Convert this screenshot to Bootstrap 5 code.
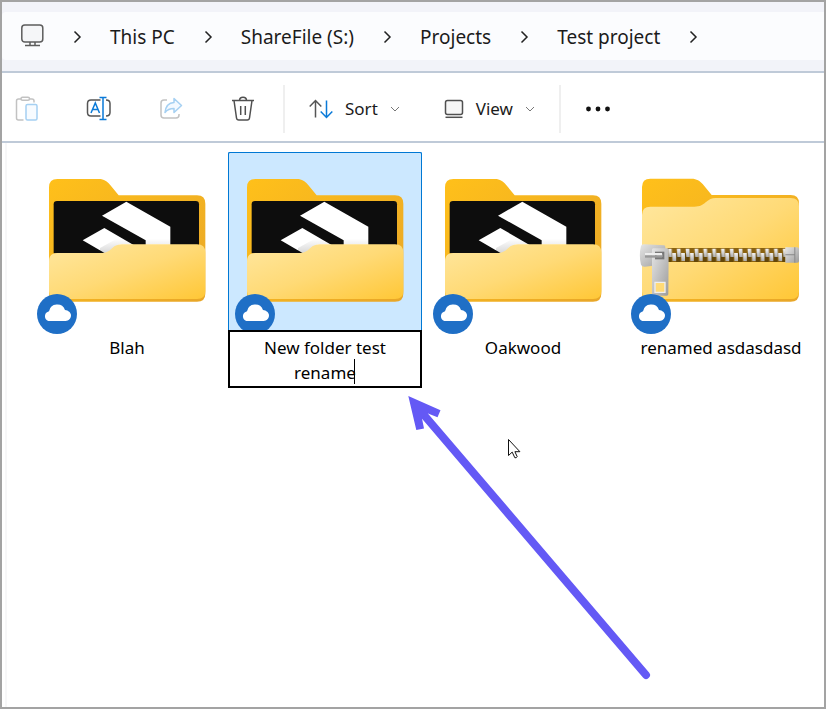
<!DOCTYPE html>
<html lang="en">
<head>
<meta charset="utf-8">
<meta name="viewport" content="width=device-width, initial-scale=1">
<title>Test project</title>
<link href="https://cdn.jsdelivr.net/npm/bootstrap@5.3.0/dist/css/bootstrap.min.css" rel="stylesheet">
<style>
body { font-family: "Noto Sans", "Open Sans", sans-serif; color: #1b1b1b; background: #fff; }
.explorer { border: 2px solid #a3a3a3; }
.address-strip { background: #f2f3f9; padding: 10px 0 11px; border-bottom: 2px solid #bfcad8; }
.address-bar { background: #fbfcfe; height: 48px; padding-left: 18px; border-radius: 4px 0 0 4px; }
.crumbs { font-size: 19px; line-height: 28px; padding-top: 2px; }
.crumbs a { color: inherit; text-decoration: none; white-space: nowrap; }
.crumbs li { display: flex; align-items: center; }
.crumb-sep { width: 9px; height: 14px; margin: 0 28px 0 29px; }
.tools { height: 70px; border-bottom: 2px solid #bfcad8; padding: 4px 0 0 1px; font-size: 17px; }
.tool { border: 0; background: none; color: inherit; padding: 0; height: 48px; display: flex; align-items: center; justify-content: center; }
.tool-icon { width: 48px; margin-right: 24px; }
.tool-menus { gap: 44px; margin: 0 24px; }
.tool-rule { width: 2px; height: 48px; background: #efefef; }
.files { padding: 9px 4px 24px 28px; column-gap: 4px; position: relative; }
.files::before { content: ""; position: absolute; left: 3px; top: 0; bottom: 0; width: 2px; background: #f7f7f8; }
.tile { width: 194px; font-size: 17px; line-height: 25px; color: #000; text-align: center; }
.tile-art { display: block; width: 100%; height: 178px; overflow: visible; }
.tile-art symbol, symbol { overflow: visible; }
.tile-name { padding-top: 5px; }
.tile-picked .tile-art { overflow: hidden; background: #cce8ff; box-shadow: inset 1px 0 #0078d4, inset -1px 0 #0078d4, inset 0 1px #0078d4; border-radius: 2px 2px 0 0; }
.rename-box { display: block; width: 100%; height: 58px; border: 2px solid #000; padding: 3px 24px 0; text-align: center; resize: none; overflow: hidden; outline: 0; color: #000; background: #fff; border-radius: 0; }
.caret { position: absolute; right: 67px; bottom: 4px; width: 1px; height: 25px; background: #000; }
.pointer-art { position: absolute; left: 0; top: 0; pointer-events: none; }
</style>
<script src="https://cdn.jsdelivr.net/npm/bootstrap@5.3.0/dist/js/bootstrap.bundle.min.js"></script>
</head>
<body>
<svg width="0" height="0" class="position-absolute" aria-hidden="true">
  <defs>
    <linearGradient id="back" x1="0" y1="0" x2="1" y2="1"><stop offset="0" stop-color="#ffc01a"/><stop offset="1" stop-color="#e8a628"/></linearGradient>
    <linearGradient id="front" x1="0" y1="0" x2="1" y2="1"><stop offset="0" stop-color="#ffe79f"/><stop offset=".5" stop-color="#ffda76"/><stop offset="1" stop-color="#ffc736"/></linearGradient>
    <linearGradient id="steel" x1="0" y1="0" x2="1" y2="1"><stop offset="0" stop-color="#e6e6e6"/><stop offset="1" stop-color="#9b9b9b"/></linearGradient>
    <linearGradient id="tooth" x1="0" y1="0" x2="0" y2="1"><stop offset="0" stop-color="#f5f5f5"/><stop offset="1" stop-color="#adadad"/></linearGradient>
    <linearGradient id="fade" x1="0" y1="0" x2="0" y2="1"><stop offset="0" stop-color="#000" stop-opacity="0"/><stop offset="1" stop-color="#000" stop-opacity=".16"/></linearGradient>
    <pattern id="teeth" x="127" y="249" width="26.500" height="42" patternUnits="userSpaceOnUse">
      <rect width="27" height="42" fill="#8a6210"/><path d="M0 16h13v26H0z" fill="#634608"/>
      <path d="M2 2h11l1 25H4z" fill="url(#tooth)"/><path d="M15 15h11l1 24H16z" fill="url(#tooth)"/>
    </pattern>
    <symbol id="cloud" viewBox="0 0 120 120">
      <circle cx="60" cy="60" r="60" fill="#1f6fc6"/>
      <path d="M34 81a15 15 0 0 1-1-28 8 8 0 0 1 3-1 25 25 0 0 1 48-4c10 1 18 8 18 16 0 10-7 17-16 17z" fill="#fff"/>
    </symbol>
    <symbol id="folder" viewBox="0 6 582 534">
      <path d="M57 112q0-25 25-25H207c15 0 25 8 33 17l26 32H501q25 0 25 25V431q0 24-25 24H82q-25 0-25-24z" fill="url(#back)"/>
      <path d="M71 163q0-10 10-10H497q10 0 10 10V310H71z" fill="#0d0d0d"/>
      <path d="M216 197 289 155 421 230V300H347V271zM158 271 223 234 316 288V310H225z" fill="#fff"/>
      <path d="M210 310h25l33-28h240v-16H260l-50 28z" fill="url(#fade)"/>
      <path d="M57 334q0-25 25-25H216c12 0 20-4 30-14 10-9 18-12 30-12H501q25 0 25 25V424q0 23-25 23H82q-25 0-25-23z" fill="url(#front)"/>
      <use href="#cloud" x="21" y="432" width="120" height="120"/>
    </symbol>
    <symbol id="zip" viewBox="0 6 582 534">
      <g transform="translate(3 45)">
        <path d="M51 66q0-25 25-25H200c15 0 25 7 33 16l27 33H497q25 0 25 25V386q0 24-25 24H76q-25 0-25-24z" fill="url(#back)"/>
        <path d="M51 150q0-25 25-25H208c17 0 25-5 34-13 10-9 18-13 30-13H497q25 0 25 25V380q0 22-25 22H76q-25 0-25-22z" fill="url(#front)"/>
        <path d="M127 249H482V291H127z" fill="url(#teeth)"/>
        <path d="M481 247h36q5 0 5 5v36q0 5-5 5H481z" fill="url(#steel)"/><path d="M481 268h29v3H481zM508 247h3v46h-3z" fill="#888"/>
        <path d="M48 243q2-6 10-5l59 3q4 1 4 5v52l-61 7q-9 1-12-6-7-28 0-56z" fill="url(#steel)"/>
        <path fill-rule="evenodd" d="M85 250h42q4 0 4 5l-1 132q0 5-5 5H84q-3 0-3-4V255q0-5 4-5zM91 353v28h29v-28z" fill="url(#steel)"/>
        <path fill-rule="evenodd" d="M88 350h34v34H88zM92 354v26h26v-26z" fill="#efefef"/>
        <path d="M90 260h28v23H90z" fill="#777"/><path d="M95 266h17v10H95z" fill="#c5c5c5"/><path d="M60 264h51v7H60z" fill="#eee"/><path d="M60 271h51v7H60z" fill="#999"/>
      </g>
      <use href="#cloud" x="21" y="432" width="120" height="120"/>
    </symbol>
    <symbol id="next" viewBox="0 0 9 14"><path d="M1.500 1.500 7 7l-5.500 5.500" fill="none" stroke="#222" stroke-width="1.500"/></symbol>
    <symbol id="down" viewBox="0 0 10 6"><path d="M1 1l4 4 4-4" fill="none" stroke="#777" stroke-width="1"/></symbol>
  </defs>
</svg>

<div class="explorer d-flex flex-column min-vh-100 position-relative overflow-hidden">
  <header class="address-strip">
    <nav class="address-bar d-flex align-items-center" aria-label="Address">
      <svg width="24" height="24" viewBox="0 0 24 24" fill="none" stroke="#5c5c5c" stroke-width="1.500" aria-hidden="true"><rect x="1.800" y="1" width="21" height="17" rx="3" fill="#f5f6f8"/><path d="M10 18v3M15 18v3M5 21.500h15"/></svg>
      <ol class="crumbs list-unstyled d-flex mb-0">
        <li><svg class="crumb-sep"><use href="#next"/></svg><a href="#">This PC</a></li>
        <li><svg class="crumb-sep"><use href="#next"/></svg><a href="#">ShareFile (S:)</a></li>
        <li><svg class="crumb-sep"><use href="#next"/></svg><a href="#">Projects</a></li>
        <li><svg class="crumb-sep"><use href="#next"/></svg><a href="#">Test project</a></li>
        <li><svg class="crumb-sep"><use href="#next"/></svg></li>
      </ol>
    </nav>
  </header>

  <div class="tools d-flex align-items-center" role="toolbar" aria-label="Commands">
    <button class="tool tool-icon" type="button" aria-label="Paste" disabled>
      <svg width="24" height="26" viewBox="0 0 24 26" fill="none" stroke-width="1.500"><path d="M6 3H3.500Q1.500 3 1.500 5V22q0 2 2 2H8.500M15 3h2q2 0 2 2v1.500" stroke="#c2c2c2"/><rect x="6" y="1.300" width="8.500" height="3" rx="1.500" stroke="#c2c2c2"/><rect x="11" y="8.500" width="11" height="15.500" rx="1.500" stroke="#a5d0f2" fill="#f7fbff"/></svg>
    </button>
    <button class="tool tool-icon" type="button" aria-label="Rename">
      <svg width="26" height="26" viewBox="0 0 26 26" fill="none" stroke-width="1.500"><path d="M14.500 4H5Q1.500 4 1.500 7.500v9Q1.500 20 5 20h9.500M20 4q4 0 4 3.500v9Q24 20 20 20" stroke="#555"/><path d="M5 17 9.300 7 13.500 17M6.500 13.500h5.600M13.500 1.500h7M13.500 23.500h7M17 1.500v22" stroke="#0a7ad8"/></svg>
    </button>
    <button class="tool tool-icon" type="button" aria-label="Share" disabled>
      <svg width="24" height="24" viewBox="0 0 24 24" fill="none" stroke-width="1.500" stroke-linejoin="round"><path d="M8 3H5Q2 3 2 6V18q0 3 3 3H17q3 0 3-3v-1" stroke="#c2c2c2"/><path d="M15 1.500 22.500 8.500 15 15.500V11.500Q9 11.500 6 15.500 7 6 15 5.500z" stroke="#a5d0f2" fill="#f3f9ff"/></svg>
    </button>
    <button class="tool tool-icon me-3" type="button" aria-label="Delete">
      <svg width="24" height="26" viewBox="0 0 24 26" fill="none" stroke="#505050" stroke-width="1.500"><path d="M1 4.500H23M8.500 4.500q0-3.300 3.500-3.300t3.500 3.300M3 4.500 5.500 22q.3 2 2.300 2h8.400q2 0 2.300-2L21 4.500M9.700 10v9M14.300 10v9"/></svg>
    </button>
    <span class="tool-rule"></span>
    <div class="tool-menus d-flex">
      <button class="tool" type="button">
        <svg width="24" height="20" viewBox="0 0 24 20" fill="none" stroke-width="1.500"><path d="M6.500 18.500V1.500M.7 7.500 6.500 1.500 12.300 7.500" stroke="#555"/><path d="M17.500 1.500v17M11.700 12.500l5.800 6 5.800-6" stroke="#0a7ad8"/></svg>
        <span class="mx-2 px-1">Sort</span><svg width="10" height="6"><use href="#down"/></svg>
      </button>
      <button class="tool" type="button">
        <svg width="20" height="20" viewBox="0 0 20 20" fill="none" stroke="#505050" stroke-width="1.500"><rect x="1.500" y="1.500" width="17" height="14" rx="2" fill="#f6f6f6"/><path d="M1.500 18.300h17"/></svg>
        <span class="mx-2 px-1">View</span><svg width="10" height="6"><use href="#down"/></svg>
      </button>
    </div>
    <span class="tool-rule"></span>
    <button class="tool ms-4" type="button" aria-label="See more"><svg width="26" height="6"><g fill="#111"><circle cx="3.500" cy="3" r="2.400"/><circle cx="13" cy="3" r="2.400"/><circle cx="22.500" cy="3" r="2.400"/></g></svg></button>
  </div>

  <main class="files d-flex flex-wrap align-content-start flex-grow-1">
    <div class="tile"><svg class="tile-art" aria-hidden="true"><use href="#folder"/></svg><div class="tile-name">Blah</div></div>
    <div class="tile tile-picked"><svg class="tile-art" aria-hidden="true"><use href="#folder"/></svg>
      <div class="position-relative"><textarea class="rename-box" aria-label="Folder name" spellcheck="false">New folder test rename</textarea><span class="caret"></span></div></div>
    <div class="tile"><svg class="tile-art" aria-hidden="true"><use href="#folder"/></svg><div class="tile-name">Oakwood</div></div>
    <div class="tile"><svg class="tile-art" aria-hidden="true"><use href="#zip"/></svg><div class="tile-name">renamed asdasdasd</div></div>
  </main>

  <svg class="pointer-art" width="822" height="705" viewBox="2 2 822 705" aria-hidden="true">
    <path d="M424 415 646 675" stroke="#6459f5" stroke-width="8" stroke-linecap="round"/>
    <path d="M408.300 396 440.500 410.300 437.500 417.300 428 413.500 422 418.500 424 428.500 416.300 430z" fill="#6459f5"/>
    <path d="M508.500 439.500v16l3.700-3.400 2.600 5.600q1.500.6 2.400-1l-2.300-5h5z" fill="#fff" stroke="#111" stroke-width="1"/>
  </svg>
</div>
</body>
</html>
